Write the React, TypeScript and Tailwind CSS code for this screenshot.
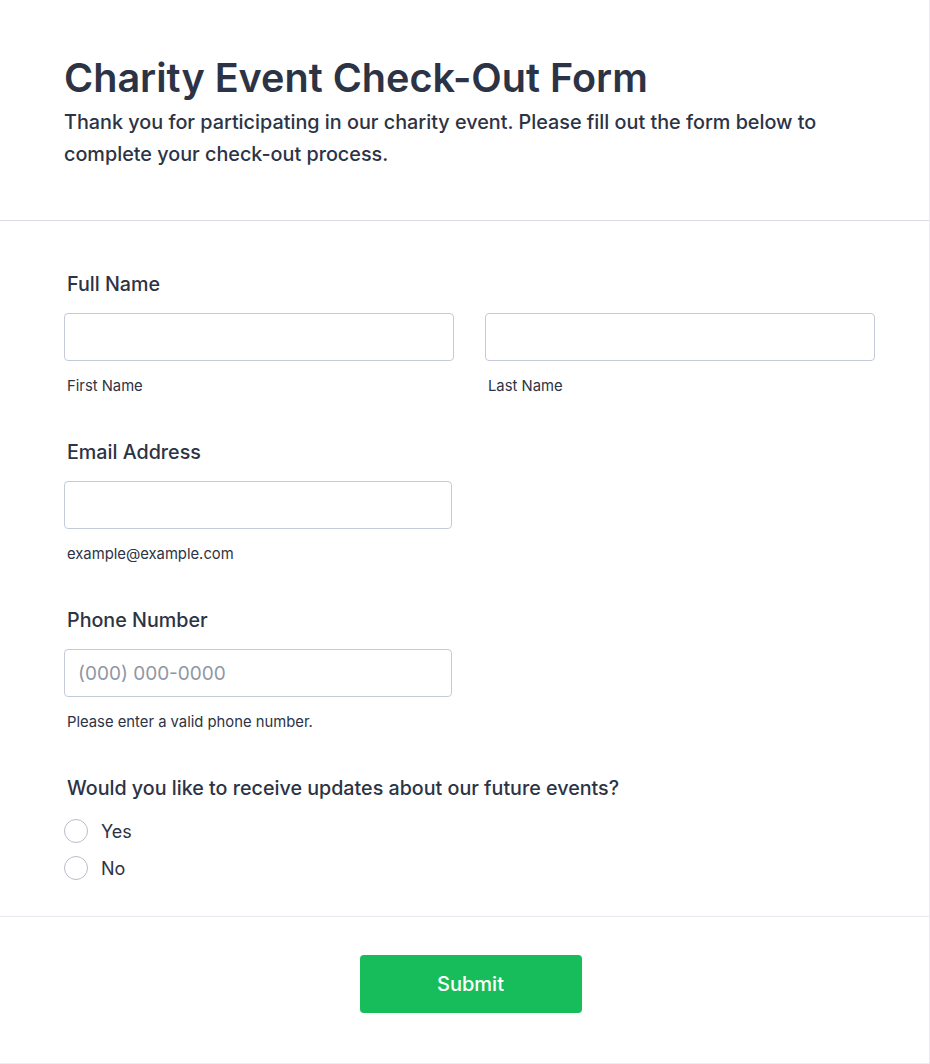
import React from "react";

const font = { fontFamily: "Inter, 'Noto Sans', sans-serif" };

function Label({ children }: { children: React.ReactNode }) {
  return <div className="text-[19.7px] leading-[24px] font-medium text-[#2c3345] pl-[3px]">{children}</div>;
}

function Sub({ children }: { children: React.ReactNode }) {
  return <div className="mt-[16px] text-[14.8px] leading-[18px] text-[#2c3345] pl-[3px]">{children}</div>;
}

function Input({ placeholder }: { placeholder?: string }) {
  return (
    <input
      type="text"
      placeholder={placeholder}
      className="w-full h-[48px] rounded-[4px] border border-[#c3cad8] bg-white px-[13px] text-[19px] text-[#2c3345] placeholder:text-[#8f96a3] outline-none"
      style={font}
    />
  );
}

function Radio({ label }: { label: string }) {
  return (
    <label className="flex items-center gap-[13px] h-[24px]">
      <span className="w-[24px] h-[24px] rounded-full border border-[#b8bdc9] bg-white shrink-0" />
      <span className="text-[18px] text-[#2c3345]">{label}</span>
    </label>
  );
}

export default function App() {
  return (
    <div className="w-[930px] min-h-[1064px] bg-white border-r border-b border-[#ececf0]" style={font}>
      <div className="px-[64px] pt-[54px] pb-[50px] border-b border-[#d8dae6]">
        <h1 className="text-[39.6px] leading-[48px] font-semibold text-[#2c3345]">
          Charity Event Check-Out Form
        </h1>
        <p className="mt-[4px] text-[19.8px] leading-[32px] text-[#2c3345] font-medium">
          Thank you for participating in our charity event. Please fill out the form below to complete your check-out process.
        </p>
      </div>

      <div className="px-[64px] pt-[51px] pb-[36px] border-b border-[#e6e9ef]">
        <div>
          <Label>Full Name</Label>
          <div className="mt-[17px] grid grid-cols-2 gap-[31px] w-[811px]">
            <div>
              <Input />
              <Sub>First Name</Sub>
            </div>
            <div>
              <Input />
              <Sub>Last Name</Sub>
            </div>
          </div>
        </div>

        <div className="mt-[45px]">
          <Label>Email Address</Label>
          <div className="mt-[17px] w-[388px]">
            <Input />
          </div>
          <Sub>example@example.com</Sub>
        </div>

        <div className="mt-[45px]">
          <Label>Phone Number</Label>
          <div className="mt-[17px] w-[388px]">
            <Input placeholder="(000) 000-0000" />
          </div>
          <Sub>Please enter a valid phone number.</Sub>
        </div>

        <div className="mt-[45px]">
          <Label>Would you like to receive updates about our future events?</Label>
          <div className="mt-[19px] flex flex-col gap-[13px]">
            <Radio label="Yes" />
            <Radio label="No" />
          </div>
        </div>
      </div>

      <div className="flex justify-center pl-[12px] pt-[38px] pb-[50px] bg-white">
        <button className="w-[222px] h-[58px] rounded-[4px] bg-[#18bd5b] text-white text-[20px] font-medium">
          Submit
        </button>
      </div>
    </div>
  );
}
